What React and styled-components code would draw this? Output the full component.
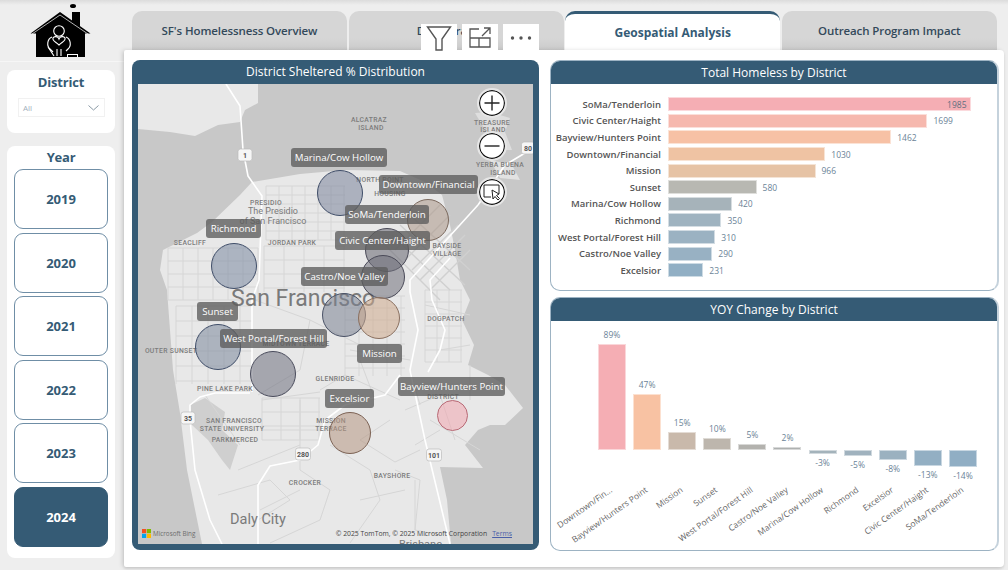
import React from 'react';
import styled, { createGlobalStyle } from 'styled-components';

const BLUE = '#355b75';

const GlobalStyle = createGlobalStyle`
  html, body {
    margin: 0;
    padding: 0;
    width: 1008px;
    height: 570px;
    overflow: hidden;
    background: #ececec;
    font-family: "Open Sans", "Liberation Sans", sans-serif;
  }
  * { box-sizing: border-box; }
`;

const YEARS = [2019, 2020, 2021, 2022, 2023, 2024];
const TABS = ["SF's Homelessness Overview", 'Demographics', 'Geospatial Analysis', 'Outreach Program Impact'];

const TOTALS = [
  ['SoMa/Tenderloin', 1985, '#f5aeb4'],
  ['Civic Center/Haight', 1699, '#f6b8ae'],
  ['Bayview/Hunters Point', 1462, '#f7c1a5'],
  ['Downtown/Financial', 1030, '#efc3a3'],
  ['Mission', 966, '#e6c3a5'],
  ['Sunset', 580, '#b8b8b2'],
  ['Marina/Cow Hollow', 420, '#a6b3ba'],
  ['Richmond', 350, '#9fb3c0'],
  ['West Portal/Forest Hill', 310, '#9bb2c2'],
  ['Castro/Noe Valley', 290, '#98b1c3'],
  ['Excelsior', 231, '#91afc4'],
];

const YOY = [
  ['Downtown/Fin...', 89, 106, '#f5aeb4'],
  ['Bayview/Hunters Point', 47, 56, '#f8c2a3'],
  ['Mission', 15, 18, '#c9b9ab'],
  ['Sunset', 10, 12, '#bdb6ad'],
  ['West Portal/Forest Hill', 5, 6, '#b3b2ae'],
  ['Castro/Noe Valley', 2, 3, '#aeb1b0'],
  ['Marina/Cow Hollow', -3, 4, '#a4b3bb'],
  ['Richmond', -5, 6, '#a0b2be'],
  ['Excelsior', -8, 10, '#9bb1c0'],
  ['Civic Center/Haight', -13, 16, '#93afc3'],
  ['SoMa/Tenderloin', -14, 17, '#90aec4'],
];

// page coordinates minus the map origin (138, 84)
const CIRCLES = [
  [340, 193, 23, 'rgba(122,132,155,.55)', '#3f4d68'],
  [428, 220, 21, 'rgba(170,150,135,.55)', '#7c6a5e'],
  [234, 266, 23, 'rgba(122,136,160,.55)', '#3f4d68'],
  [387, 250, 22, 'rgba(100,100,112,.55)', '#4a4a58'],
  [383, 277, 22, 'rgba(112,112,122,.55)', '#4a4a58'],
  [344, 315, 22, 'rgba(122,130,146,.55)', '#4a5266'],
  [379, 318, 21, 'rgba(205,170,140,.55)', '#8a7060'],
  [218, 347, 23, 'rgba(122,134,155,.55)', '#3f4d68'],
  [273, 374, 23, 'rgba(110,112,125,.55)', '#4a4c5c'],
  [350, 433, 21, 'rgba(180,150,130,.55)', '#7c6254'],
  [452, 415, 15.5, 'rgba(240,165,175,.55)', '#b86a76'],
];

const LABELS = [
  ['Marina/Cow Hollow', 291, 148, 96],
  ['Downtown/Financial', 379, 175, 99],
  ['SoMa/Tenderloin', 345, 205, 84],
  ['Richmond', 206, 219, 55],
  ['Civic Center/Haight', 335, 231, 95],
  ['Castro/Noe Valley', 301, 267, 87],
  ['Sunset', 197, 302, 41],
  ['West Portal/Forest Hill', 220, 329, 107],
  ['Mission', 357, 344, 45],
  ['Bayview/Hunters Point', 398, 377, 107],
  ['Excelsior', 325, 389, 49],
];

const PLACES = [
  ['ALCATRAZ', 369, 122], ['ISLAND', 371, 129.5], ['TREASURE', 492, 125], ['ISLAND', 493, 132],
  ['YERBA BUENA', 500, 167], ['ISLAND', 503, 175], ['NORTH POINT', 380, 182], ['PRESIDIO', 266, 205],
  ['SEACLIFF', 190, 245], ['JORDAN PARK', 292, 245], ['OUTER SUNSET', 171, 353], ['PINE LAKE PARK', 225, 391],
  ['GLENRIDGE', 335, 381], ['SAN FRANCISCO', 234, 423], ['STATE UNIVERSITY', 232, 431], ['PARKMERCED', 235, 442],
  ['CROCKER', 305, 485], ['MISSION', 331, 423], ['TERRACE', 331, 431], ['BAYSHORE', 392, 478],
  ['DOGPATCH', 446, 321], ['BAYSIDE', 447, 248], ['VILLAGE', 447, 256], ['MIDTOWN TERRACE', 296, 346],
  ['DISTRICT', 443, 399], ['HOUSING', 390, 196],
];

const SHIELDS = [['1', 245, 155, 14], ['35', 188, 418, 14], ['280', 303, 454, 15], ['101', 434, 455, 15], ['80', 528, 148, 13]];

const range = (from, to, step) => {
  const out = [];
  for (let v = from; v <= to; v += step) out.push(v);
  return out;
};

const gridPath = (x0, x1, y0, y1, sx, sy) => [
  ...range(y0, y1, sy).map((y) => `M${x0} ${y}H${x1}`),
  ...range(x0, x1, sx).map((x) => `M${x} ${y0}V${y1}`),
].join('');

const STREETS = [
  gridPath(168, 258, 248, 300, 15, 13),
  gridPath(176, 252, 306, 384, 16, 15),
  gridPath(266, 345, 186, 240, 13, 9),
  gridPath(264, 345, 246, 292, 20, 14),
  gridPath(345, 405, 296, 376, 14, 12),
  gridPath(262, 320, 398, 440, 19, 14),
  'M255 300L310 320L300 370M300 370L258 395M310 320L360 345M350 350L410 360',
  'M262 400L320 392M300 400V470M262 430H320M218 495L270 480L290 500L258 520M300 470L330 490L320 520L270 543',
  'M330 445L370 470L380 500L350 543M390 420L360 440L395 462L420 450M405 410L440 395L455 440',
  'M395 470L420 480L415 530L440 535M415 480V530M360 360L375 400M410 370L420 405',
  'M430 420L480 450M440 430L415 445M470 365L470 400M440 350L470 345M425 305L470 315',
  'M205 395L240 445M238 470L300 445M320 390L345 375L400 400M300 490L260 510M360 500L405 490',
  gridPath(425, 462, 290, 362, 12, 12),
];

const DENSE = 'M395 250L440 205M405 260L450 215M412 270L458 225M420 280L465 235M430 290L470 250M400 225L465 285M392 235L450 290M385 245L440 300M410 215L470 270';

const Page = styled.div`
  display: flex;
  width: 1008px;
  height: 570px;
  background: linear-gradient(#dcdcdc 0, #eeeeee 5px);
`;

const Sidebar = styled.aside`
  display: flex;
  flex-direction: column;
  width: 124px;
  flex: none;
`;

const LogoBar = styled.div`
  height: 62px;
  padding: 3px 0 0 29px;
  border-bottom: 1px solid #f6f6f6;
`;

const Card = styled.section`
  width: 108px;
  margin-left: 7px;
  background: #fff;
  border-radius: 8px;
`;

const DistrictCard = styled(Card)`
  height: 63px;
  margin-top: 8px;
  padding-top: 3px;
`;

const YearCard = styled(Card)`
  height: 412px;
  margin-top: 13px;
  padding: 2px 7px 0;
`;

const SlicerTitle = styled.div`
  color: ${BLUE};
  font-size: 13px;
  font-weight: 700;
  letter-spacing: -.2px;
  line-height: 18px;
  text-align: center;
`;

const Dropdown = styled.div`
  display: flex;
  align-items: center;
  justify-content: space-between;
  width: 87px;
  height: 19px;
  margin: 7px 0 0 11px;
  padding: 0 5px 0 4px;
  border: 1px solid #f1f1f1;
  color: #9fb0bc;
  font-size: 8px;
`;

const YearList = styled.div`
  display: flex;
  flex-direction: column;
  gap: 3.6px;
  margin-top: 3px;
`;

const YearButton = styled.div`
  display: flex;
  align-items: center;
  justify-content: center;
  height: 60px;
  border-radius: 9px;
  border: 1px solid ${(p) => (p.$active ? BLUE : '#6f8ea6')};
  background: ${(p) => (p.$active ? BLUE : '#fff')};
  color: ${(p) => (p.$active ? '#fff' : BLUE)};
  font-size: 13px;
  font-weight: 700;
`;

const Main = styled.main`
  position: relative;
  display: flex;
  flex-direction: column;
  width: 880px;
  flex: none;
`;

const TabRow = styled.nav`
  display: flex;
  gap: 1.6px;
  height: 50px;
  padding: 11px 0 0 8px;
`;

const Tab = styled.div`
  display: flex;
  align-items: center;
  justify-content: center;
  width: 215px;
  height: 39px;
  border-radius: 10px 10px 0 0;
  border-top: ${(p) => (p.$active ? `3px solid ${BLUE}` : 'none')};
  background: ${(p) => (p.$active ? '#fff' : 'linear-gradient(#d6d6d6 70%, #cbcbcb)')};
  color: ${(p) => (p.$active ? BLUE : '#33495a')};
  font-size: ${(p) => (p.$active ? 12 : 11.5)}px;
  font-weight: ${(p) => (p.$active ? 700 : 600)};
  letter-spacing: ${(p) => (p.$active ? 0 : -0.1)}px;
`;

const Toolbar = styled.div`
  position: absolute;
  top: 24px;
  left: 297px;
  display: flex;
  gap: 5px;
`;

const ToolButton = styled.div`
  display: flex;
  align-items: center;
  justify-content: center;
  width: 36px;
  height: 28px;
  background: #fff;
`;

const Panel = styled.div`
  display: grid;
  grid-template-columns: 407px 449px;
  gap: 11px;
  width: 880px;
  height: 517px;
  padding: 10px 8px;
  background: #fff;
  border-radius: 2px 4px 4px 2px;
  box-shadow: -2px 0 4px rgba(0, 0, 0, .12), 0 2px 3px rgba(0, 0, 0, .1);
`;

const MapCard = styled.section`
  display: flex;
  flex-direction: column;
  height: 490px;
  padding: 0 6px 6px;
  background: ${BLUE};
  border-radius: 8px;
`;

const MapTitle = styled.h2`
  margin: 0;
  height: 24px;
  color: #fff;
  font-size: 12px;
  font-weight: 400;
  line-height: 24px;
  text-align: center;
`;

const MapCanvas = styled.div`
  position: relative;
  width: 395px;
  height: 460px;
  overflow: hidden;
  background: #c8c8c8;
`;

const MapArt = styled.svg`
  display: block;
`;

const Bubble = styled.div`
  position: absolute;
  left: ${(p) => p.$x - p.$r - 138}px;
  top: ${(p) => p.$y - p.$r - 84}px;
  width: ${(p) => p.$r * 2}px;
  height: ${(p) => p.$r * 2}px;
  border-radius: 50%;
  background: ${(p) => p.$fill};
  border: 1px solid ${(p) => p.$line};
`;

const MapLabel = styled.div`
  position: absolute;
  left: ${(p) => p.$x - 138}px;
  top: ${(p) => p.$y - 84}px;
  width: ${(p) => p.$w}px;
  height: 18.5px;
  border-radius: 3px;
  background: rgba(92, 92, 92, .78);
  color: #fff;
  font-size: 9.7px;
  line-height: 19px;
  text-align: center;
  white-space: nowrap;
`;

const MapControl = styled.div`
  position: absolute;
  left: ${492 - 15 - 138}px;
  top: ${(p) => p.$y - 15 - 84}px;
  display: flex;
  align-items: center;
  justify-content: center;
  width: 30px;
  height: 30px;
  border-radius: 50%;
  background: #fff;
  border: 2px solid #e6e6e6;
  box-shadow: inset 0 0 0 1.2px #111;
`;

const Attribution = styled.div`
  position: absolute;
  right: 21px;
  bottom: 5px;
  display: flex;
  gap: 5px;
  color: #444;
  font-size: 6.8px;
  line-height: 10px;
`;

const TermsLink = styled.span`
  color: #4a5fa8;
  text-decoration: underline;
`;

const BingMark = styled.div`
  position: absolute;
  left: 4px;
  bottom: 6px;
  display: flex;
  align-items: center;
  gap: 2px;
  color: #6c6c6c;
  font-size: 6.3px;
  line-height: 9px;
`;

const ChartColumn = styled.div`
  display: flex;
  flex-direction: column;
  gap: 6px;
`;

const ChartCard = styled.section`
  height: ${(p) => p.$h}px;
  border: 1px solid #9db3c3;
  border-right: 2px solid #c5d2dc;
  border-radius: 10px;
  overflow: hidden;
  background: #fff;
`;

const ChartTitle = styled.h2`
  margin: 0;
  height: 23px;
  background: ${BLUE};
  color: #fff;
  font-size: 12px;
  font-weight: 400;
  line-height: 23px;
  text-align: center;
`;

const BarList = styled.div`
  display: flex;
  flex-direction: column;
  padding-top: 12px;
`;

const BarRow = styled.div`
  display: flex;
  align-items: center;
  height: 16.6px;
`;

const BarName = styled.div`
  width: 110px;
  margin-right: 7px;
  color: #555;
  font-size: 9.5px;
  font-weight: 600;
  text-align: right;
  white-space: nowrap;
`;

const Bar = styled.div`
  height: 14px;
  background: ${(p) => p.$color};
  border: 1px solid rgba(255, 255, 255, .55);
`;

const BarValue = styled.div`
  margin-left: ${(p) => (p.$inside ? -24 : 6)}px;
  color: ${(p) => (p.$inside ? '#5f6f80' : '#6b8397')};
  font-size: 8.5px;
`;

const ColumnChart = styled.div`
  display: flex;
  gap: 7.1px;
  padding: 14px 0 0 47px;
`;

const ColumnItem = styled.div`
  display: flex;
  flex-direction: column;
  width: 28px;
`;

const UpperZone = styled.div`
  display: flex;
  flex-direction: column;
  justify-content: flex-end;
  align-items: center;
  height: 115px;
`;

const LowerZone = styled.div`
  display: flex;
  flex-direction: column;
  align-items: center;
  height: 34px;
`;

const ColumnBar = styled.div`
  width: 28px;
  height: ${(p) => p.$h}px;
  flex: none;
  background: ${(p) => p.$color};
  border: 1px solid rgba(255, 255, 255, .5);
`;

const ColumnValue = styled.div`
  color: #6b8397;
  font-size: 8.5px;
  line-height: 12px;
  margin: ${(p) => (p.$below ? '3px 0 0' : '0 0 3px')};
  white-space: nowrap;
`;

const AxisSlot = styled.div`
  display: flex;
  justify-content: flex-end;
  width: 10px;
`;

const AxisLabel = styled.div`
  flex: none;
  color: #666;
  font-size: 8.5px;
  line-height: 11px;
  white-space: nowrap;
  transform-origin: 100% 0;
  transform: rotate(-35deg);
`;

const Logo = () => (
  <svg width="64" height="56" viewBox="29 3 64 56">
    <ellipse cx="73" cy="6" rx="3" ry="2" fill="#000" />
    <path d="M72 12h8v14h-8z" fill="#000" />
    <path d="M60 12L90.500 33.500H85V57H36V33.500H30.500z" fill="#000" />
    <g fill="none" stroke="#fff" strokeWidth="1.1">
      <path d="M32 34L60 15L88 34" strokeWidth=".7" />
      <circle cx="59" cy="31" r="5.300" />
      <path d="M52 37c-5 2-5.500 9-2 12l3 3M66 37c5 2 5.500 9 2 12l-2 2" />
      <path d="M59 45c-3-3-7-4-6-7 1-2 5-2 6 1 1-3 5-3 6-1 1 3-3 4-6 7z" />
      <path d="M48 47l6 9M57 49v7M61 49v7" />
    </g>
    <path d="M67 54h11v3H67z" fill="#fff" />
    <path d="M68 55h9v2h-9z" fill="#000" />
  </svg>
);

const MapDrawing = () => (
  <MapArt width="395" height="460" viewBox="138 84 395 460">
    <rect x="138" y="84" width="395" height="460" fill="#c8c8c8" />
    <path d="M138 84H258V103L245 110L240 122L218 125L195 136L170 132L138 129Z" fill="#e8e8e8" />
    <path d="M475 113L490 112L510 118L505 132L512 150L497 150L488 135Z" fill="#dedede" />
    <path d="M490 160L512 165L520 180L500 178Z" fill="#e2e2e2" />
    <path d="M160 270L163 250L197 233L212 222L240 195L252 182L300 174L345 170L400 171L425 182L442 195L450 225L455 250L460 280L470 300L462 320L474 345L468 365L488 375L505 385L523 408L505 425L490 425L478 430L465 445L483 468L440 467L447 500L451 544H202L187 470L180 413L173 370L167 290Z" fill="#e8e8e8" />
    <path d="M190 405L205 398L225 412L222 430L238 445L230 470L222 460L208 440L192 425Z" fill="#cfcfcf" />
    <g fill="none" stroke="#d6d6d6" strokeWidth="1">
      {STREETS.map((d) => <path key={d} d={d} />)}
      <path d={DENSE} strokeWidth="1.4" stroke="#d0d0d0" />
    </g>
    <g fill="none" stroke="#fff" strokeWidth="1.6" strokeLinejoin="round">
      <path d="M226 84L240 106L243 150L248 176L262 196L259 280L252 300V392" />
      <path d="M258 544V485L270 466L300 460L318 445L325 420L345 405L385 395L400 375" />
      <path d="M190 420V405L200 397L215 393H250M190 420L195 470L210 520L222 544" />
      <path d="M478 205L410 280V292L418 330L410 370L425 440L450 544" />
      <path d="M450 258L430 280L432 300L445 330L440 350L428 372" />
      <path d="M478 205L505 165L530 150" />
    </g>
    {SHIELDS.map(([t, x, y, w]) => (
      <g key={t}>
        <rect x={x - w / 2} y={y - 6} width={w} height="12" rx="2.500" fill="#f6f6f6" stroke="#bbb" strokeWidth=".7" />
        <text x={x} y={y + 3} fontSize="7" fontWeight="700" fill="#555" textAnchor="middle" fontFamily="Roboto, sans-serif">{t}</text>
      </g>
    ))}
    <g fontFamily="Roboto, sans-serif" fontSize="6.800" fontWeight="500" fill="#7c7c7c" textAnchor="middle" letterSpacing=".3">
      {PLACES.map(([t, x, y]) => <text key={t + x} x={x} y={y}>{t}</text>)}
    </g>
    <g fontFamily="Roboto, sans-serif" fill="#7a7a7a">
      <text x="273" y="214" fontSize="9" textAnchor="middle">The Presidio</text>
      <text x="273" y="224" fontSize="9" textAnchor="middle">of San Francisco</text>
      <text x="231" y="306" fontSize="23">San Francisco</text>
      <text x="230" y="524" fontSize="14.500">Daly City</text>
      <text x="399" y="548" fontSize="11">Brisbane</text>
    </g>
  </MapArt>
);

const FilterIcon = () => (
  <svg width="26" height="28" viewBox="0 0 26 28" fill="none" stroke="#555" strokeWidth="1.400">
    <path d="M1.500 3h23L16 15v11h-6V15z" />
  </svg>
);

const FocusIcon = () => (
  <svg width="24" height="22" viewBox="0 0 24 22" fill="none" stroke="#555" strokeWidth="1.300">
    <path d="M11 2H2v18h20v-9H11v9M2 11h9M14 9L22 1M16 1h6v6" />
  </svg>
);

const MoreIcon = () => (
  <svg width="24" height="6" viewBox="0 0 24 6" fill="#555">
    <circle cx="3.500" cy="3" r="1.700" />
    <circle cx="12" cy="3" r="1.700" />
    <circle cx="20.500" cy="3" r="1.700" />
  </svg>
);

const SelectIcon = () => (
  <svg width="20" height="20" viewBox="0 0 20 20" fill="none" stroke="#222" strokeWidth="1">
    <path d="M2 3h15v9M2 3v12h7" />
    <path d="M10 8l1 9 2-2.500 3 3.500 1.500-1.500-3-3 2.500-1.500z" fill="#fff" />
  </svg>
);

const App = () => (
  <Page>
    <GlobalStyle />
    <Sidebar>
      <LogoBar><Logo /></LogoBar>
      <DistrictCard>
        <SlicerTitle>District</SlicerTitle>
        <Dropdown>
          All
          <svg width="11" height="6" viewBox="0 0 11 6" fill="none" stroke="#8a9aa6"><path d="M.5.500L5.500 5 10.500.5" /></svg>
        </Dropdown>
      </DistrictCard>
      <YearCard>
        <SlicerTitle>Year</SlicerTitle>
        <YearList>
          {YEARS.map((y) => <YearButton key={y} $active={y === 2024}>{y}</YearButton>)}
        </YearList>
      </YearCard>
    </Sidebar>
    <Main>
      <TabRow>
        {TABS.map((t) => <Tab key={t} $active={t === 'Geospatial Analysis'}>{t}</Tab>)}
      </TabRow>
      <Toolbar>
        <ToolButton><FilterIcon /></ToolButton>
        <ToolButton><FocusIcon /></ToolButton>
        <ToolButton><MoreIcon /></ToolButton>
      </Toolbar>
      <Panel>
        <MapCard>
          <MapTitle>District Sheltered % Distribution</MapTitle>
          <MapCanvas>
            <MapDrawing />
            {CIRCLES.map(([x, y, r, fill, line]) => <Bubble key={`${x}-${y}`} $x={x} $y={y} $r={r} $fill={fill} $line={line} />)}
            {LABELS.map(([t, x, y, w]) => <MapLabel key={t} $x={x} $y={y} $w={w}>{t}</MapLabel>)}
            <MapControl $y={103}>
              <svg width="18" height="18" viewBox="0 0 18 18" stroke="#222" strokeWidth="1.400"><path d="M1.500 9h15M9 1.500v15" /></svg>
            </MapControl>
            <MapControl $y={146}>
              <svg width="18" height="18" viewBox="0 0 18 18" stroke="#222" strokeWidth="1.400"><path d="M1.500 9h15" /></svg>
            </MapControl>
            <MapControl $y={192}><SelectIcon /></MapControl>
            <BingMark>
              <svg width="9" height="9" viewBox="0 0 9 9">
                <path d="M0 0h4.200v4.200H0z" fill="#f25022" />
                <path d="M4.800 0H9v4.200H4.800z" fill="#7fba00" />
                <path d="M0 4.800h4.200V9H0z" fill="#00a4ef" />
                <path d="M4.800 4.800H9V9H4.800z" fill="#ffb900" />
              </svg>
              Microsoft Bing
            </BingMark>
            <Attribution>
              <span>© 2025 TomTom, © 2025 Microsoft Corporation</span>
              <TermsLink>Terms</TermsLink>
            </Attribution>
          </MapCanvas>
        </MapCard>
        <ChartColumn>
          <ChartCard $h={231}>
            <ChartTitle>Total Homeless by District</ChartTitle>
            <BarList>
              {TOTALS.map(([name, value, color]) => (
                <BarRow key={name}>
                  <BarName>{name}</BarName>
                  <Bar $color={color} style={{ width: value * 0.1527 }} />
                  <BarValue $inside={value > 1900}>{value}</BarValue>
                </BarRow>
              ))}
            </BarList>
          </ChartCard>
          <ChartCard $h={254}>
            <ChartTitle>YOY Change by District</ChartTitle>
            <ColumnChart>
              {YOY.map(([name, pct, h, color]) => (
                <ColumnItem key={name}>
                  <UpperZone>
                    {pct > 0 && <ColumnValue>{pct}%</ColumnValue>}
                    {pct > 0 && <ColumnBar $h={h} $color={color} />}
                  </UpperZone>
                  <LowerZone>
                    {pct < 0 && <ColumnBar $h={h} $color={color} />}
                    {pct < 0 && <ColumnValue $below>{pct}%</ColumnValue>}
                  </LowerZone>
                  <AxisSlot><AxisLabel>{name}</AxisLabel></AxisSlot>
                </ColumnItem>
              ))}
            </ColumnChart>
          </ChartCard>
        </ChartColumn>
      </Panel>
    </Main>
  </Page>
);

export default App;
